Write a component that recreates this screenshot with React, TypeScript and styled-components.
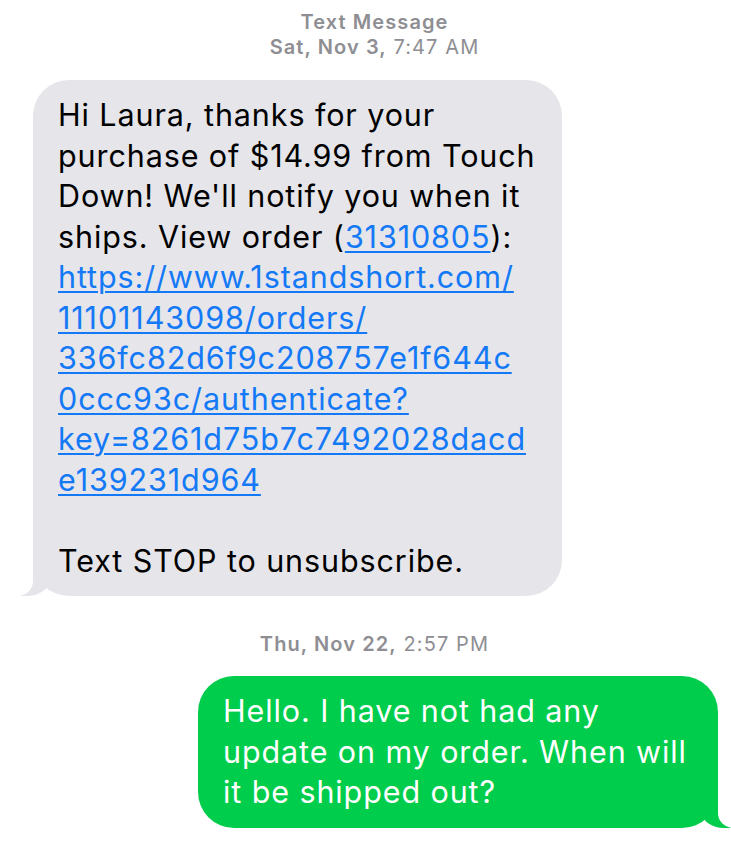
import React from 'react';
import styled, { createGlobalStyle } from 'styled-components';

const GRAY = '#e5e5ea';
const GREEN = '#00cd4b';

const GlobalStyle = createGlobalStyle`
	html, body {
		margin: 0;
		padding: 0;
		background: #fff;
	}
	body {
		font-family: Inter, "Liberation Sans", Arial, sans-serif;
		-webkit-font-smoothing: antialiased;
	}
`;

const Thread = styled.div`
	width: 731px;
	height: 850px;
	overflow: hidden;
	display: flex;
	flex-direction: column;
	padding-top: 10px;
	box-sizing: border-box;
`;

// timestamps sit a little right of the page centre in the screenshot
const Stamp = styled.div<{ $top: number; $bottom: number }>`
	text-align: center;
	color: #8e8e93;
	font-size: 20px;
	line-height: 25px;
	letter-spacing: 1.1px;
	padding-left: 18px;
	margin-top: ${p => p.$top}px;
	margin-bottom: ${p => p.$bottom}px;

	b {
		font-weight: 600;
	}
`;

const Bubble = styled.div<{ $mine?: boolean; $width: number }>`
	position: relative;
	box-sizing: border-box;
	width: ${p => p.$width}px;
	align-self: ${p => (p.$mine ? 'flex-end' : 'flex-start')};
	margin: ${p => (p.$mine ? '0 13px 0 0' : '0 0 0 33px')};
	padding: 15px 18px 15px 25px;
	border-radius: 36px;
	background: ${p => (p.$mine ? GREEN : GRAY)};
	color: ${p => (p.$mine ? '#fff' : '#000')};
	font-size: 30.5px;
	line-height: 40.5px;
	letter-spacing: 0.9px;

	&::before,
	&::after {
		content: '';
		position: absolute;
		bottom: 0;
		height: 36px;
	}

	&::before {
		z-index: 0;
		width: 32px;
		background: ${p => (p.$mine ? GREEN : GRAY)};
		${p => (p.$mine
			? 'right: -13px; border-bottom-left-radius: 24px 22px;'
			: 'left: -13px; border-bottom-right-radius: 24px 22px;')}
	}

	&::after {
		z-index: 1;
		width: 38px;
		background: #fff;
		${p => (p.$mine
			? 'right: -38px; border-bottom-left-radius: 15px;'
			: 'left: -38px; border-bottom-right-radius: 15px;')}
	}
`;

const Body = styled.div`
	position: relative;
	z-index: 2;
	white-space: nowrap;
`;

const Link = styled.a`
	color: #1479f6;
	text-decoration: underline;
	text-decoration-thickness: 1.5px;
	text-underline-offset: 3px;
`;

const Gap = styled.div`
	height: 40.5px;
`;

const App: React.FC = () => {
	return (
		<>
			<GlobalStyle />
			<Thread>
				<Stamp $top={0} $bottom={20}>
					<b>Text Message</b>
					<br />
					<b>Sat, Nov 3,</b> 7:47 AM
				</Stamp>

				<Bubble $width={529}>
					<Body>
						Hi Laura, thanks for your<br />
						purchase of $14.99 from Touch<br />
						Down! We'll notify you when it<br />
						ships. View order (<Link>31310805</Link>):<br />
						<Link>
							https://www.1standshort.com/<br />
							11101143098/orders/<br />
							336fc82d6f9c208757e1f644c<br />
							0ccc93c/authenticate?<br />
							key=8261d75b7c7492028dacd<br />
							e139231d964
						</Link>
						<Gap />
						Text STOP to unsubscribe.
					</Body>
				</Bubble>

				<Stamp $top={36} $bottom={19}>
					<b>Thu, Nov 22,</b> 2:57 PM
				</Stamp>

				<Bubble $mine $width={520}>
					<Body>
						Hello. I have not had any<br />
						update on my order. When will<br />
						it be shipped out?
					</Body>
				</Bubble>
			</Thread>
		</>
	);
};

export default App;
